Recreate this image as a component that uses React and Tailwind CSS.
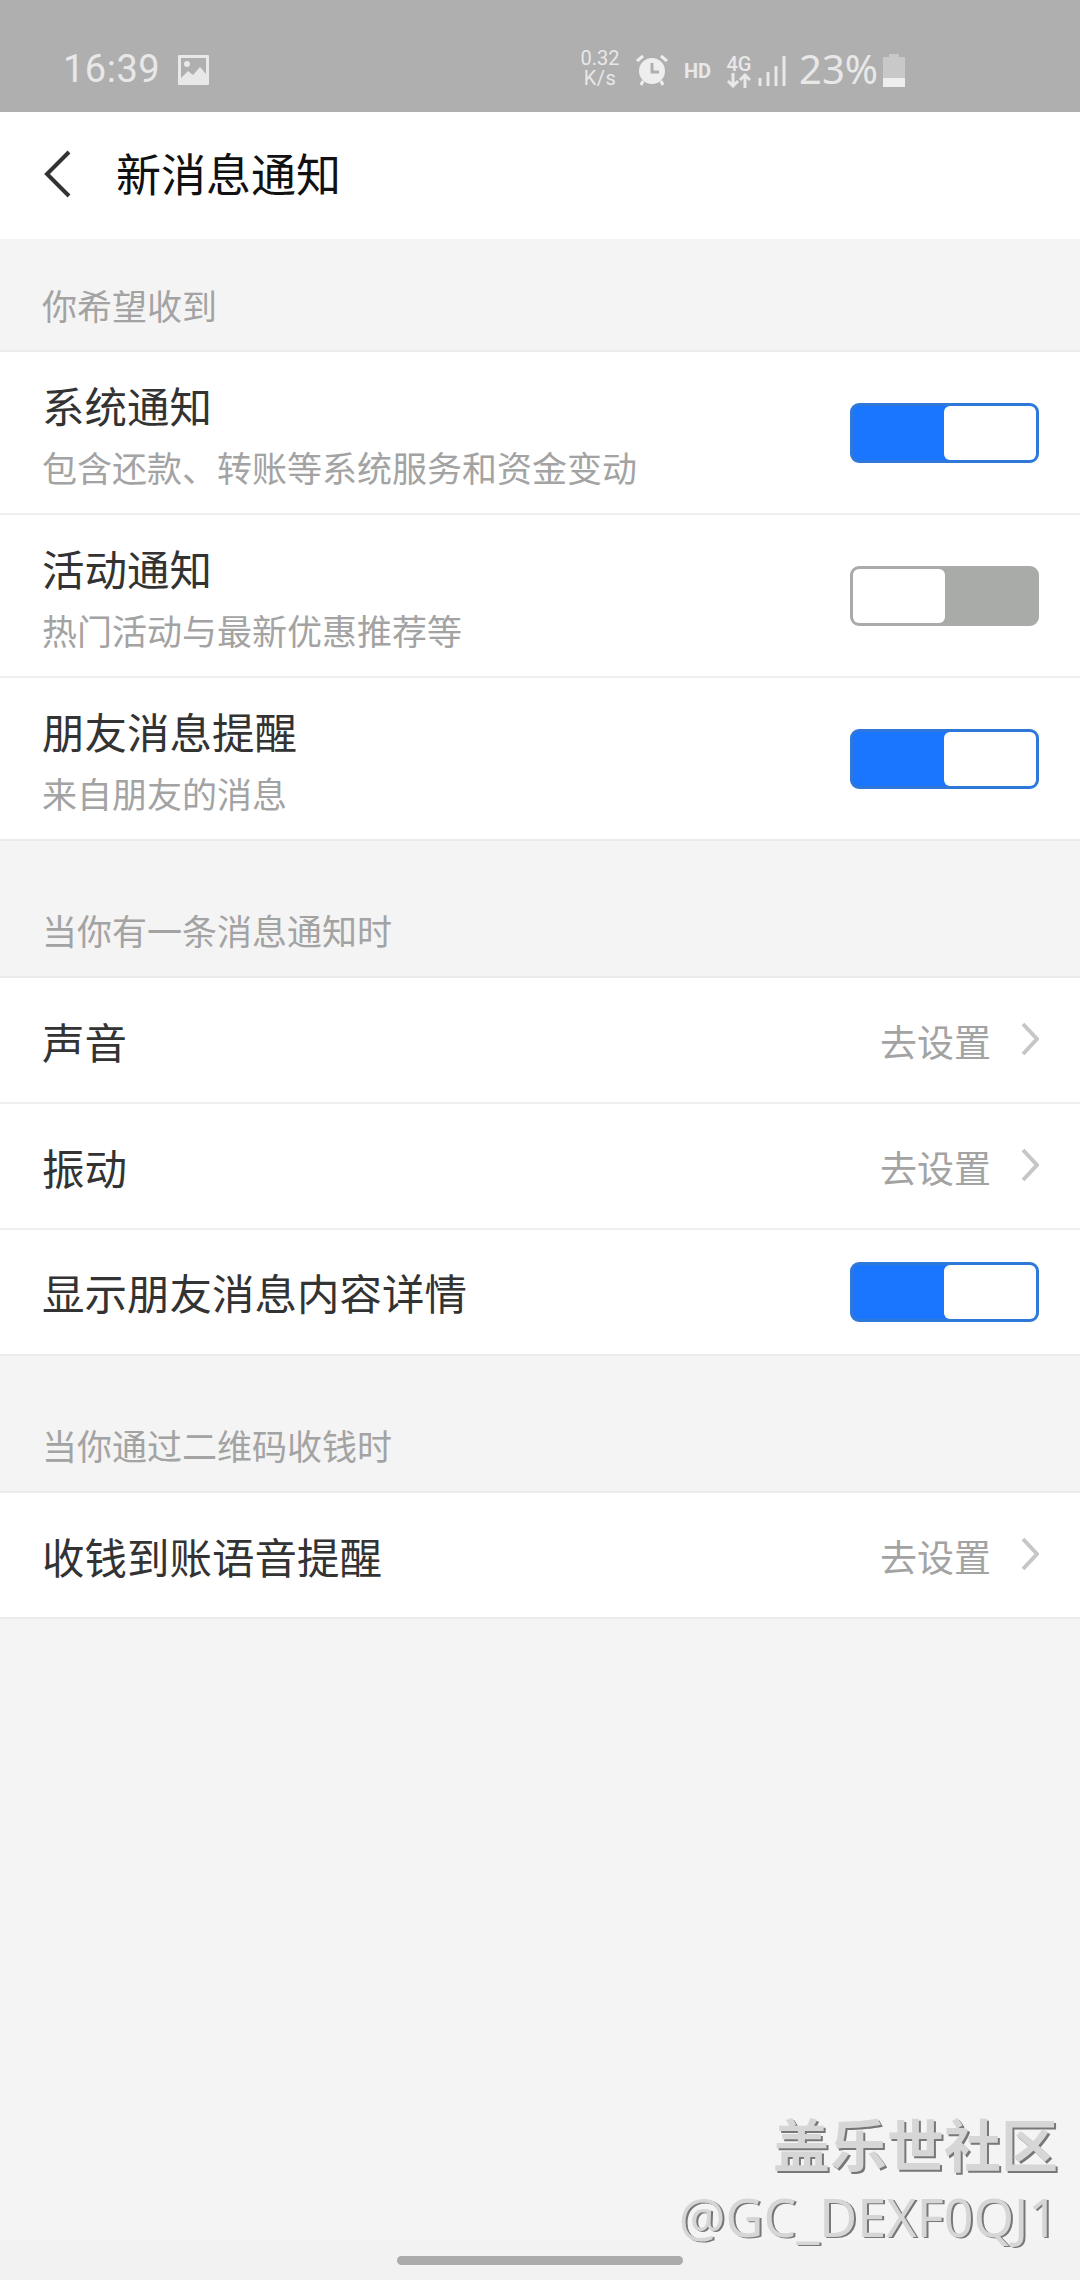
function Toggle({ on }) {
  if (on) {
    return (
      <div className="flex h-[60px] w-[189px] shrink-0 justify-end rounded-[9px] border-[3px] border-[#2f78da] bg-[#1a76ff]">
        <div className="h-full w-[92px] rounded-[6px] bg-white" />
      </div>
    );
  }
  return (
    <div className="flex h-[60px] w-[189px] shrink-0 rounded-[9px] border-[3px] border-[#a9aba8] bg-[#a9aba8]">
      <div className="h-full w-[92px] rounded-[6px] bg-white" />
    </div>
  );
}

function SectionLabel({ children, className }) {
  return (
    <div className={`flex items-center border-b-2 border-[#ebebeb] pl-[42px] text-[35px] leading-none text-[#a3a3a3] ${className}`}>
      {children}
    </div>
  );
}

function TwoLineRow({ title, sub, on, last }) {
  return (
    <div className={`flex h-[163px] items-center justify-between bg-white pl-[42px] pr-[41px] ${last ? "border-b-2 border-[#ebebeb]" : "border-b-2 border-[#efefef]"}`}>
      <div className="flex flex-col pt-[1px]">
        <span className="text-[42.5px] leading-[56px] text-[#333333]">{title}</span>
        <span className="mt-[12px] text-[35px] leading-[44px] text-[#a3a3a3]">{sub}</span>
      </div>
      <Toggle on={on} />
    </div>
  );
}

function LinkRow({ title, last }) {
  return (
    <div className={`flex h-[126px] items-center justify-between bg-white pl-[42px] pr-[41px] pt-[2px] ${last ? "border-b-2 border-[#ebebeb]" : "border-b-2 border-[#efefef]"}`}>
      <span className="text-[42.5px] leading-none text-[#333333]">{title}</span>
      <div className="flex items-center">
        <span className="text-[37px] leading-none text-[#a3a3a3]">去设置</span>
        <svg className="mb-[4px] ml-[30px]" width="18" height="34" viewBox="0 0 18 34">
          <path d="M2 2l14 15L2 32" stroke="#c6c6c6" strokeWidth="4" fill="none" />
        </svg>
      </div>
    </div>
  );
}

function StatusBar() {
  return (
    <div className="flex h-[112px] items-end bg-[#afafaf] pb-[24px] pl-[63px] text-[#e8e8e8]">
      <span className="w-[95px] font-['Roboto',sans-serif] text-[38px] leading-[38px] tracking-[0.5px]">16:39</span>
      <svg className="mb-[3px] ml-[20px]" width="31" height="30" viewBox="0 0 31 30">
        <path fillRule="evenodd" fill="#e8e8e8" d="M1 0h29a1 1 0 0 1 1 1v28a1 1 0 0 1-1 1H1a1 1 0 0 1-1-1V1a1 1 0 0 1 1-1zM3 3v20l7-7 5 4 7-8 6 7V3z" />
        <circle cx="9" cy="9" r="3" fill="#e8e8e8" />
      </svg>
      <div className="ml-[370px] flex w-[42px] flex-col items-center font-['Roboto',sans-serif] text-[20px] leading-[20px]">
        <span>0.32</span>
        <span className="tracking-[0.5px]">K/s</span>
      </div>
      <svg className="mb-[2px] ml-[14px]" width="34" height="32" viewBox="0 0 34 32">
        <circle cx="17" cy="17" r="13" fill="#eeeeee" />
        <path d="M17 9v9h7" stroke="#afafaf" strokeWidth="3" fill="none" />
        <path d="M2 7l6-5M32 7l-6-5" stroke="#eeeeee" strokeWidth="3" />
        <path d="M8 27l-2 4M26 27l2 4" stroke="#eeeeee" strokeWidth="3" />
      </svg>
      <span className="mb-[7px] ml-[15px] w-[26px] font-['Roboto',sans-serif] text-[20px] font-bold leading-[20px]">HD</span>
      <div className="ml-[17px] flex w-[24px] flex-col items-center font-['Roboto',sans-serif]">
        <span className="text-[20px] font-medium leading-[18px]">4G</span>
        <svg width="24" height="15" viewBox="0 0 24 15">
          <path d="M6 0v13M1 8l5 5 5-5M18 15V2M13 7l5-5 5 5" stroke="#e8e8e8" strokeWidth="3" fill="none" />
        </svg>
      </div>
      <svg className="mb-[2px] ml-[7px]" width="28" height="30" viewBox="0 0 28 30">
        <path d="M2 30v-8M10 30v-14M18 30v-20M26 30V0" stroke="#e8e8e8" strokeWidth="3" />
      </svg>
      <span className="ml-[13px] w-[82px] font-['Noto_Sans',sans-serif] text-[40px] leading-[38px]">23%</span>
      <svg className="mb-[1px] ml-[2px]" width="22" height="33" viewBox="0 0 22 33">
        <path d="M6 0h10v3h6v30H0V3h6z" fill="#c8c8c8" />
        <rect x="0" y="24" width="22" height="9" fill="#eeeeee" />
      </svg>
    </div>
  );
}

export default function App() {
  return (
    <div className="relative flex min-h-[2280px] w-[1080px] flex-col bg-[#f4f4f4] font-['Noto_Sans_CJK_SC',sans-serif]">
      <StatusBar />

      {/* Header */}
      <div className="flex h-[127px] items-center bg-white">
        <svg className="mb-[3px] ml-[43px]" width="28" height="48" viewBox="0 0 28 48">
          <path d="M26 2L4 24l22 22" stroke="#333333" strokeWidth="4" fill="none" />
        </svg>
        <span className="mb-[7px] ml-[45px] text-[45px] leading-none text-[#111111]">新消息通知</span>
      </div>

      <SectionLabel className="h-[113px] pt-[20px]">你希望收到</SectionLabel>
      <TwoLineRow title="系统通知" sub="包含还款、转账等系统服务和资金变动" on />
      <TwoLineRow title="活动通知" sub="热门活动与最新优惠推荐等" />
      <TwoLineRow title="朋友消息提醒" sub="来自朋友的消息" on last />

      <SectionLabel className="h-[137px] pt-[41px]">当你有一条消息通知时</SectionLabel>
      <LinkRow title="声音" />
      <LinkRow title="振动" />
      <div className="flex h-[126px] items-center justify-between border-b-2 border-[#ebebeb] bg-white pl-[42px] pr-[41px]">
        <span className="text-[42.5px] leading-none text-[#333333]">显示朋友消息内容详情</span>
        <Toggle on />
      </div>

      <SectionLabel className="h-[137px] pt-[41px]">当你通过二维码收钱时</SectionLabel>
      <LinkRow title="收钱到账语音提醒" last />

      <div className="flex-1" />

      {/* Nav bar */}
      <div className="flex h-[40px] justify-center bg-[#f2f2f2] pt-[16px]">
        <div className="h-[9px] w-[286px] rounded-full bg-[#ababab]" />
      </div>

      {/* Watermark */}
      <div className="absolute bottom-[35px] right-[22px] flex flex-col items-end">
        <span className="text-[57px] font-bold leading-[64px] text-[#d6d6d6] [text-shadow:2px_2px_0_#777777]">盖乐世社区</span>
        <span className="mt-[15px] font-['Noto_Sans',sans-serif] text-[52px] leading-[56px] text-[#d6d6d6] [text-shadow:2px_1px_0_#777777]">@GC_DEXF0QJ1</span>
      </div>
    </div>
  );
}
